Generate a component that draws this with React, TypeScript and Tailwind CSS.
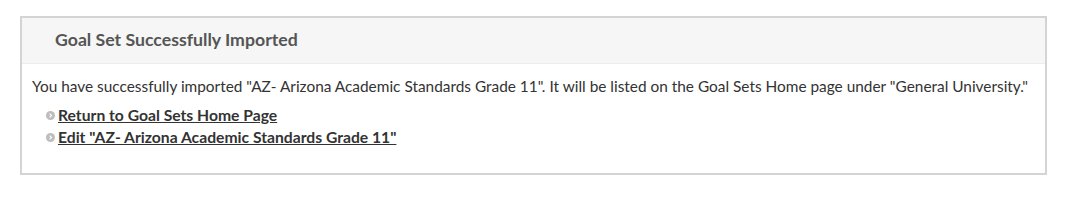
import React from "react";

function Bullet() {
  return (
    <svg width="9" height="9" viewBox="0 0 9 9" className="shrink-0">
      <circle cx="4.5" cy="4.5" r="4.5" fill="#bdbdbd" />
      <path d="M3.6 2.6 L5.5 4.5 L3.6 6.4" stroke="#fff" strokeWidth="1.2" fill="none" />
    </svg>
  );
}

export default function App() {
  const links = [
    "Return to Goal Sets Home Page",
    'Edit "AZ- Arizona Academic Standards Grade 11"',
  ];

  return (
    <div className="w-[1074px] h-[200px] bg-white pt-4 pl-5" style={{ fontFamily: "Lato, 'Open Sans', sans-serif" }}>
      <div className="w-[1027px] h-[159px] border-2 border-[#d4d4d4]">
        {/* Header */}
        <div className="h-[46px] bg-[#f6f6f6] border-b border-[#ececec] flex items-center pl-[33px]">
          <h2 className="text-[17.7px] font-bold text-[#555]">Goal Set Successfully Imported</h2>
        </div>

        {/* Body */}
        <div className="pl-[10px] pt-[12px]">
          <p className="text-[15.4px] text-[#333] leading-[20px]">
            You have successfully imported "AZ- Arizona Academic Standards Grade 11". It will be listed on the Goal Sets Home page under "General University."
          </p>
          <ul className="mt-[9px] pl-[14px] space-y-[2px]">
            {links.map((l) => (
              <li key={l} className="flex items-center gap-[3px]">
                <Bullet />
                <a href="#" className="text-[15.7px] font-bold text-[#333] underline leading-[20px]">
                  {l}
                </a>
              </li>
            ))}
          </ul>
        </div>
      </div>
    </div>
  );
}
